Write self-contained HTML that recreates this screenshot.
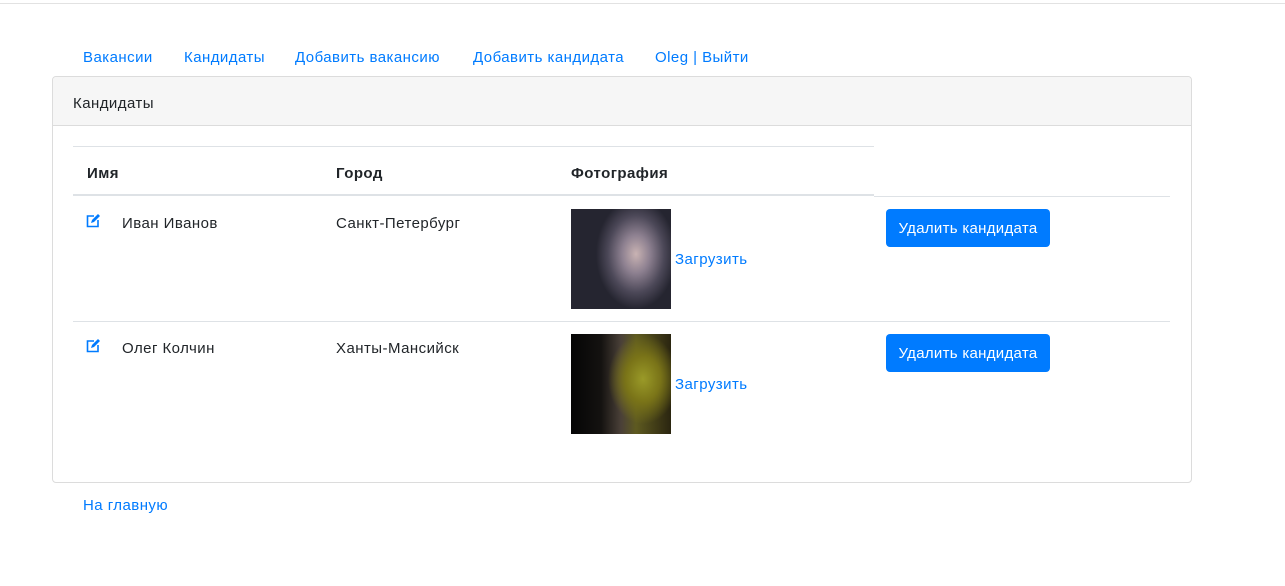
<!DOCTYPE html>
<html><head><meta charset="utf-8"><style>
body{margin:0;width:1285px;height:586px;background:#fff;font-family:"Liberation Sans",sans-serif;font-size:15px;letter-spacing:0.45px;color:#212529;position:relative;overflow:hidden}
.a{position:absolute;white-space:nowrap}
.l{color:#007bff}
.ln{position:absolute;background:#dee2e6}
.btn{position:absolute;background:#007bff;color:#fff;border-radius:4px;width:164px;height:38px;line-height:40px;text-align:center;letter-spacing:0.3px}
.img{position:absolute;width:100px;height:100px}
</style></head><body>
<div class="ln" style="left:0;top:3px;width:1285px;height:1px;background:#e2e2e2"></div>
<div class="a l" style="left:83px;top:49px">Вакансии</div>
<div class="a l" style="left:184px;top:49px">Кандидаты</div>
<div class="a l" style="left:295px;top:49px">Добавить вакансию</div>
<div class="a l" style="left:473px;top:49px">Добавить кандидата</div>
<div class="a l" style="left:655px;top:49px">Oleg | Выйти</div>
<div style="position:absolute;left:52px;top:76px;width:1138px;height:405px;border:1px solid #dcdcdc;border-radius:4px"></div>
<div style="position:absolute;left:53px;top:77px;width:1138px;height:48px;background:#f6f6f6;border-bottom:1px solid #dcdcdc;border-radius:4px 4px 0 0"></div>
<div class="a" style="left:73px;top:95px">Кандидаты</div>
<div class="ln" style="left:73px;top:146px;width:801px;height:1px"></div>
<div class="a" style="left:87px;top:165px;font-weight:bold">Имя</div>
<div class="a" style="left:336px;top:165px;font-weight:bold">Город</div>
<div class="a" style="left:571px;top:165px;font-weight:bold">Фотография</div>
<div class="ln" style="left:73px;top:194px;width:801px;height:2px"></div>
<div class="ln" style="left:874px;top:196px;width:296px;height:1px"></div>
<div class="ln" style="left:73px;top:321px;width:1097px;height:1px"></div>
<svg class="a" style="left:85px;top:213px" width="16" height="16" viewBox="0 0 16 16"><path d="M9 3H2.5v10.5H13V7" fill="none" stroke="#007bff" stroke-width="1.6"/><path d="M6 10l1-3 6-6 2 2-6 6z" fill="#007bff"/></svg>
<svg class="a" style="left:85px;top:338px" width="16" height="16" viewBox="0 0 16 16"><path d="M9 3H2.5v10.5H13V7" fill="none" stroke="#007bff" stroke-width="1.6"/><path d="M6 10l1-3 6-6 2 2-6 6z" fill="#007bff"/></svg>
<div class="a" style="left:122px;top:215px">Иван Иванов</div>
<div class="a" style="left:336px;top:215px">Санкт-Петербург</div>
<div class="img" style="left:571px;top:209px;background:radial-gradient(ellipse 40% 55% at 65% 45%,#c9b3b3 0%,#8d8090 35%,#4c4858 70%,#252530 100%),#252530"></div>
<div class="a l" style="left:675px;top:251px">Загрузить</div>
<div class="btn" style="left:886px;top:209px">Удалить кандидата</div>
<div class="a" style="left:122px;top:340px">Олег Колчин</div>
<div class="a" style="left:336px;top:340px">Ханты-Мансийск</div>
<div class="img" style="left:571px;top:334px;background:radial-gradient(ellipse 35% 45% at 72% 45%,#9a9a28 0%,#7a7418 50%,transparent 100%),linear-gradient(90deg,#050505 0%,#141210 30%,#4a4038 50%,#5e5a20 65%,#2a2510 100%)"></div>
<div class="a l" style="left:675px;top:376px">Загрузить</div>
<div class="btn" style="left:886px;top:334px">Удалить кандидата</div>
<div class="a l" style="left:83px;top:497px">На главную</div>
</body></html>
